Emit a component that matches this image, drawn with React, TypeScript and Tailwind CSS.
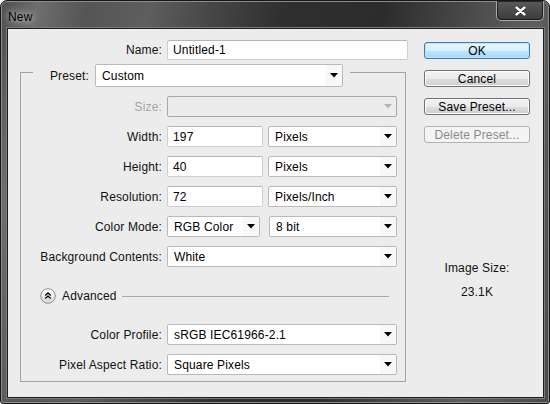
import React from "react";

function Tri({ disabled = false }: { disabled?: boolean }) {
  return (
    <svg width="8" height="5" viewBox="0 0 8 5">
      <polygon points="0,0 8,0 4,4.5" fill={disabled ? "#b4b4b4" : "#000"} />
    </svg>
  );
}

function Select({
  text,
  className,
  disabled = false,
}: {
  text: string;
  className: string;
  disabled?: boolean;
}) {
  return (
    <div
      className={
        "flex items-stretch rounded-[2px] border " +
        (disabled ? "border-[#a8a8a8] bg-[#ececec] " : "border-[#b9b9b9] bg-white ") +
        className
      }
    >
      <div className="flex-1 flex items-center pl-[6px] text-black whitespace-nowrap overflow-hidden">
        {text}
      </div>
      <div
        className={
          "w-[16px] flex items-center justify-center " +
          (disabled ? "" : "bg-[#f6f8fa]")
        }
      >
        <Tri disabled={disabled} />
      </div>
    </div>
  );
}

function Input({ text, className }: { text: string; className: string }) {
  return (
    <div
      className={
        "flex items-center rounded-[2px] border border-[#cfcfcf] border-t-[#b5b5b5] bg-white pl-[5px] text-black " +
        className
      }
    >
      {text}
    </div>
  );
}

function Label({ text, disabled = false }: { text: string; disabled?: boolean }) {
  return (
    <div
      className={
        "w-[141px] shrink-0 text-right whitespace-nowrap " +
        (disabled ? "text-[#a3a3a3]" : "text-[#111]")
      }
    >
      {text}
    </div>
  );
}

function Btn({
  text,
  variant = "normal",
}: {
  text: string;
  variant?: "default" | "normal" | "disabled";
}) {
  const cls =
    variant === "default"
      ? "border-[#3c7fb1] bg-[linear-gradient(#eaf6fd_0%,#d9f0fc_50%,#bee6fd_51%,#a7d9f5_100%)] text-black shadow-[inset_0_0_0_1px_#b9e4fa]"
      : variant === "disabled"
      ? "border-[#adb2b5] bg-[#f4f4f4] text-[#8a8a8a]"
      : "border-[#707070] bg-[linear-gradient(#f2f2f2_0%,#ebebeb_50%,#dddddd_51%,#cfcfcf_100%)] text-black shadow-[inset_0_0_0_1px_#fcfcfc]";
  return (
    <div
      className={
        "w-[106px] h-[17px] rounded-[3px] border flex items-center justify-center leading-none " +
        cls
      }
    >
      {text}
    </div>
  );
}

export default function App() {
  return (
    <div className="w-[550px] h-[404px] bg-white font-['Segoe_UI','Liberation_Sans',sans-serif] text-[12px] leading-[16px] tracking-[0.15px]">
      <div className="relative w-[550px] h-[404px] flex flex-col rounded-t-[7px] rounded-b-[3px] border border-[#161616] bg-[linear-gradient(100deg,#4c4c4c_0%,#6e6e6e_6%,#555_14%,#5e5e5e_24%,#474747_34%,#2f2f2f_46%,#2c2c2c_62%,#4a4a4a_76%,#5e5e5e_86%,#4a4a4a_100%)] shadow-[inset_0_0_0_1px_#8c8c8c]">
        {/* title bar */}
        <div className="h-[27px] flex items-start shrink-0">
          <div className="pl-[7px] pt-[8px] text-black [text-shadow:0_0_6px_rgba(255,255,255,0.85),0_0_12px_rgba(255,255,255,0.5)]">
            New
          </div>
          <div className="ml-auto mr-[5px] w-[48px] h-[20px] rounded-b-[5px] border border-t-0 border-[#a9a9a9] shadow-[inset_0_0_0_1px_rgba(0,0,0,0.55)] bg-[linear-gradient(#5a5a5a,#3a3a3a)] flex items-center justify-center">
            <svg width="11" height="10" viewBox="0 0 11 10">
              <path
                d="M1.5 1.5 L9.5 8.5 M9.5 1.5 L1.5 8.5"
                stroke="#2a2a2a"
                strokeWidth="4"
                strokeLinecap="round"
              />
              <path
                d="M1.5 1.5 L9.5 8.5 M9.5 1.5 L1.5 8.5"
                stroke="#fff"
                strokeWidth="2.4"
                strokeLinecap="round"
              />
            </svg>
          </div>
        </div>

        {/* client area */}
        <div className="flex-1 ml-[6px] mr-[5px] mb-[5px] border border-[#1e1e1e] bg-[#ececec] shadow-[0_0_0_1px_#7a7a7a] flex">
          {/* left column */}
          <div className="pl-[12px] flex flex-col">
            <div className="mt-[11px] flex items-center h-[20px]">
              <div className="w-[142px] text-right text-[#111]">Name:</div>
              <Input text="Untitled-1" className="ml-[5px] w-[241px] h-[20px]" />
            </div>

            <div className="mt-[12px] w-[386px] border border-[#a3a3a3] flex flex-col pb-[6px]">
              {/* legend */}
              <div className="-mt-[9px] ml-[12px] w-[317px] h-[23px] bg-[#ececec] flex items-center">
                <div className="w-[56px] text-right text-[#111]">Preset:</div>
                <Select text="Custom" className="ml-[6px] w-[248px] h-[23px]" />
              </div>

              <div className="mt-[9px] flex flex-col gap-[9px]">
                <div className="flex items-center h-[21px]">
                  <Label text="Size:" disabled />
                  <Select text="" disabled className="ml-[5px] w-[230px] h-[21px]" />
                </div>
                <div className="flex items-center h-[21px]">
                  <Label text="Width:" />
                  <Input text="197" className="ml-[5px] w-[96px] h-[21px]" />
                  <Select text="Pixels" className="ml-[5px] w-[129px] h-[21px]" />
                </div>
                <div className="flex items-center h-[21px]">
                  <Label text="Height:" />
                  <Input text="40" className="ml-[5px] w-[96px] h-[21px]" />
                  <Select text="Pixels" className="ml-[5px] w-[129px] h-[21px]" />
                </div>
                <div className="flex items-center h-[21px]">
                  <Label text="Resolution:" />
                  <Input text="72" className="ml-[5px] w-[96px] h-[21px]" />
                  <Select text="Pixels/Inch" className="ml-[5px] w-[129px] h-[21px]" />
                </div>
                <div className="flex items-center h-[21px]">
                  <Label text="Color Mode:" />
                  <Select text="RGB Color" className="ml-[5px] w-[93px] h-[21px]" />
                  <Select text="8 bit" className="ml-[9px] w-[128px] h-[21px]" />
                </div>
                <div className="flex items-center h-[21px]">
                  <Label text="Background Contents:" />
                  <Select text="White" className="ml-[5px] w-[230px] h-[21px]" />
                </div>
              </div>

              {/* advanced */}
              <div className="mt-[21px] h-[16px] flex items-center pl-[19px] pr-[16px]">
                <svg width="16" height="16" viewBox="0 0 16 16">
                  <defs>
                    <linearGradient id="adv" x1="0" y1="0" x2="0" y2="1">
                      <stop offset="0" stopColor="#ffffff" />
                      <stop offset="1" stopColor="#d6d6d6" />
                    </linearGradient>
                  </defs>
                  <circle cx="8" cy="8" r="7.3" fill="url(#adv)" stroke="#8f8f8f" strokeWidth="1" />
                  <path
                    d="M5.3 7.4 L8 4.9 L10.7 7.4 M5.3 10.6 L8 8.1 L10.7 10.6"
                    fill="none"
                    stroke="#000"
                    strokeWidth="1.3"
                  />
                </svg>
                <div className="ml-[6px] text-[#111]">Advanced</div>
                <div className="ml-[5px] flex-1 h-px bg-[#a8a8a8]" />
              </div>

              <div className="mt-[20px] flex flex-col gap-[9px]">
                <div className="flex items-center h-[21px]">
                  <Label text="Color Profile:" />
                  <Select text="sRGB IEC61966-2.1" className="ml-[5px] w-[230px] h-[21px]" />
                </div>
                <div className="flex items-center h-[21px]">
                  <Label text="Pixel Aspect Ratio:" />
                  <Select text="Square Pixels" className="ml-[5px] w-[230px] h-[21px]" />
                </div>
              </div>
            </div>
          </div>

          {/* right column */}
          <div className="ml-[16px] flex flex-col items-center w-[106px]">
            <div className="mt-[13px] flex flex-col gap-[11px]">
              <Btn text="OK" variant="default" />
              <Btn text="Cancel" />
              <Btn text="Save Preset..." />
              <Btn text="Delete Preset..." variant="disabled" />
            </div>
            <div className="mt-[117px] text-[#111]">Image Size:</div>
            <div className="mt-[8px] text-[#111]">23.1K</div>
          </div>
        </div>
      </div>
    </div>
  );
}
